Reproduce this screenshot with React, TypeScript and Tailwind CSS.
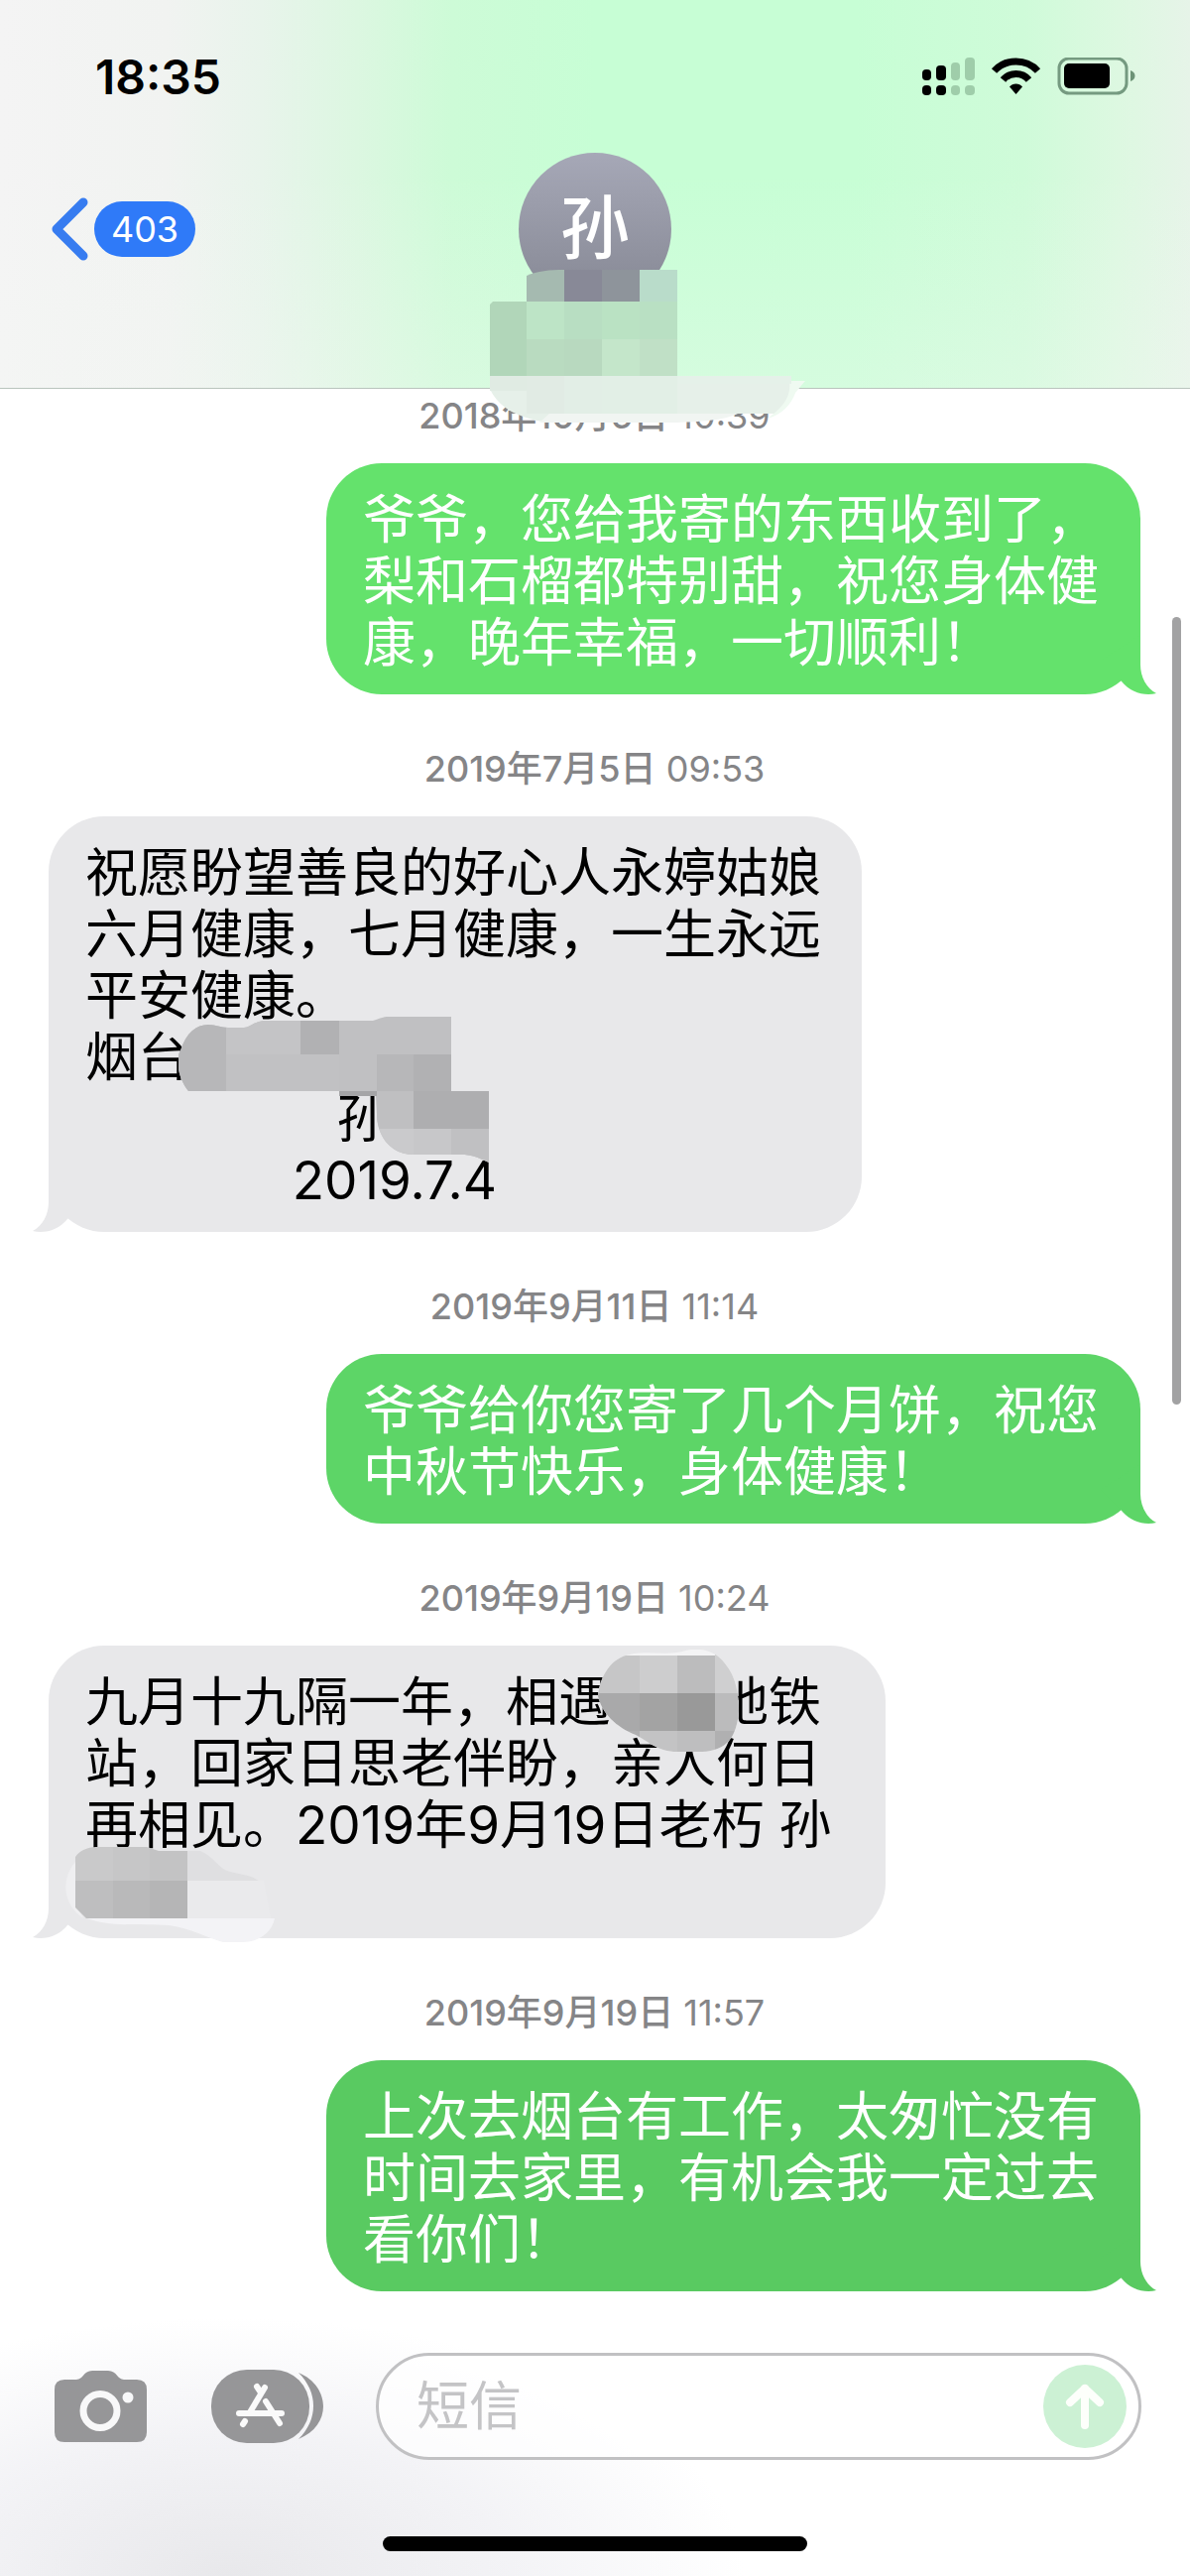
import type { ReactNode } from 'react';

interface Message {
  id: number;
  date: string;
  time: string;
  text: string;
  sent: boolean;
  color: string;
  bubbleClass: string;
  cover?: ReactNode;
}

type Cell = [x: number, y: number, width: number, height: number, fill: string];

function Cells({ cells }: { cells: Cell[] }) {
  return (
    <>
      {cells.map(([x, y, width, height, fill], i) => (
        <rect key={i} x={x} y={y} width={width} height={height} fill={fill} />
      ))}
    </>
  );
}

// pixelated covers over private names and addresses
function NameCover() {
  return (
    <svg
      className="absolute left-1/2 top-[272px] -ml-[106px]"
      width="318"
      height="156"
      viewBox="0 0 318 156"
      aria-hidden="true"
    >
      <path d="M0 118 L190 112 L316 112 C306 122 304 138 290 145 L189 145 L189 154 L60 154 C30 150 8 140 -1 118Z" fill="#e6f0e9" />
      <path d="M60 145 H250 C236 152 210 153 189 154 H50Z" fill="#f1f5f2" />
      <path d="M302 112 H318 L308 124 C304 136 294 146 280 150 C296 138 304 128 302 112Z" fill="#effaf1" />
      <path d="M37 40 V6 C48 1 60 0 75 0 V40Z" fill="#a5bab0" />
      <Cells
        cells={[
          [75, 0, 38, 32, '#888997'],
          [113, 0, 38, 32, '#8e949b'],
          [151, 0, 38, 32, '#b9dcca'],
          [37, 32, 38, 38, '#bde4c6'],
          [75, 32, 38, 38, '#b8dec2'],
          [113, 32, 38, 38, '#bae2c3'],
          [151, 32, 38, 38, '#b9e0c3'],
          [37, 70, 38, 37, '#b9dbc0'],
          [75, 70, 38, 37, '#b8d9bf'],
          [113, 70, 38, 37, '#c4e6ca'],
          [151, 70, 38, 37, '#c0e0c6'],
          [0, 107, 37, 15, '#e0ebe3'],
          [37, 107, 38, 38, '#e1ebe4'],
          [75, 107, 38, 38, '#e2eee6'],
          [113, 107, 76, 38, '#e2efe6'],
          [189, 107, 115, 8, '#e5f1e9'],
        ]}
      />
      <path d="M3 32 H37 V107 H0 V35Z" fill="#b1d6b9" />
    </svg>
  );
}

function AddressCover() {
  return (
    <svg className="absolute left-[131px] top-[202px]" width="314" height="148" viewBox="0 0 314 148" aria-hidden="true">
      <clipPath id="address">
        <path d="M10 75 C-3 58 -2 40 2 34 C8 16 18 8 30 8 C38 8 42 11 50 11 H66 C74 10 76 4 90 4 H196 C203 2 206 0 212 0 H275 V75 H313 V147 C300 141 295 139 285 139 H235 C212 138 200 118 200 98 L199 80 H162 V75Z" />
      </clipPath>
      <g clipPath="url(#address)">
        <rect width="314" height="148" fill="#c0c0c2" />
        <Cells
          cells={[
            [0, 0, 48, 75, '#b7b7b9'],
            [48, 0, 75, 38, '#c4c4c6'],
            [123, 0, 39, 38, '#b1b1b3'],
            [48, 38, 114, 37, '#c1c1c3'],
            [200, 38, 37, 37, '#b7b7b9'],
            [237, 38, 38, 37, '#b1b1b3'],
            [162, 75, 38, 5, '#a5a5a7'],
            [200, 75, 37, 38, '#bfbfc1'],
            [237, 75, 76, 38, '#aeaeb0'],
            [200, 113, 37, 35, '#cacacc'],
            [237, 113, 38, 35, '#c7c7c9'],
            [275, 113, 38, 35, '#c0c0c2'],
          ]}
        />
      </g>
    </svg>
  );
}

function StationCover() {
  return (
    <>
      <svg className="absolute left-[554px] top-1" width="144" height="104" viewBox="0 0 144 104" aria-hidden="true">
        <clipPath id="station">
          <path d="M0 47 C2 26 14 8 32 5 C50 1 70 6 85 2 C100 -3 118 0 128 14 C140 28 142 47 142 62 C140 88 130 102 105 103 H80 C60 103 50 92 38 86 C18 78 4 64 0 47Z" />
        </clipPath>
        <g clipPath="url(#station)">
          <rect width="144" height="104" fill="#f4f4f5" />
          <Cells
            cells={[
              [0, 6, 42, 38, '#c6c6c7'],
              [42, 6, 38, 38, '#cdcdce'],
              [80, 6, 38, 38, '#bcbcbd'],
              [118, 0, 26, 44, '#cfcfd0'],
              [0, 44, 42, 38, '#a9a9aa'],
              [42, 44, 38, 38, '#a3a3a3'],
              [80, 44, 38, 38, '#999999'],
              [118, 44, 26, 38, '#bbbbbc'],
              [0, 82, 42, 22, '#b0b0b1'],
              [42, 82, 38, 22, '#c3c3c4'],
              [80, 82, 38, 22, '#bebebf'],
              [118, 82, 26, 22, '#b0b0b1'],
            ]}
          />
        </g>
      </svg>
      <svg className="absolute left-[11px] top-[200px]" width="220" height="102" viewBox="0 0 220 102" aria-hidden="true">
        <path d="M16 18 C2 34 2 60 24 75 L16 60Z" fill="#efeff1" />
        <path d="M129 7 H142 C155 12 160 25 172 28 L190 32 C202 35 207 45 204 37 V37 H129Z" fill="#dfdfe1" />
        <path d="M129 37 H206 L213 75 H129Z" fill="#eaeaec" />
        <path d="M28 75 H217 C214 90 200 99 185 99 H165 C150 95 130 84 110 82 C80 80 50 84 28 75Z" fill="#f3f3f6" />
        <clipPath id="signature">
          <path d="M16 13 C22 4 32 3 40 3 H88 L100 7 H129 V75 H27 L16 64Z" />
        </clipPath>
        <g clipPath="url(#signature)">
          <Cells
            cells={[
              [0, 0, 54, 37, '#c9c9ca'],
              [54, 0, 37, 37, '#c6c6c7'],
              [91, 0, 38, 37, '#c3c3c4'],
              [0, 37, 54, 38, '#bebebf'],
              [54, 37, 37, 38, '#b9b9ba'],
              [91, 37, 38, 38, '#b5b5b6'],
            ]}
          />
        </g>
      </svg>
    </>
  );
}

const messages: Message[] = [
  {
    id: 1,
    date: '2018年10月6日',
    time: '10:39',
    text: '爷爷，您给我寄的东西收到了，\n梨和石榴都特别甜，祝您身体健\n康，晚年幸福，一切顺利！',
    sent: true,
    color: '#64e26c',
    bubbleClass: 'w-[821px] bg-[#64e26c] text-white',
  },
  {
    id: 2,
    date: '2019年7月5日',
    time: '09:53',
    text: '祝愿盼望善良的好心人永婷姑娘\n六月健康，七月健康，一生永远\n平安健康。\n烟台\n                 孙\n              2019.7.4',
    sent: false,
    color: '#e8e8ea',
    bubbleClass: 'w-[820px] bg-[#e8e8ea] text-black',
    cover: <AddressCover />,
  },
  {
    id: 3,
    date: '2019年9月11日',
    time: '11:14',
    text: '爷爷给你您寄了几个月饼，祝您\n中秋节快乐，身体健康！',
    sent: true,
    color: '#5dd567',
    bubbleClass: 'w-[821px] bg-[#5dd567] text-white',
  },
  {
    id: 4,
    date: '2019年9月19日',
    time: '10:24',
    text: '九月十九隔一年，相遇　　地铁\n站，回家日思老伴盼，亲人何日\n再相见。2019年9月19日老朽 孙\n ',
    sent: false,
    color: '#e8e8ea',
    bubbleClass: 'w-[844px] bg-[#e8e8ea] text-black',
    cover: <StationCover />,
  },
  {
    id: 5,
    date: '2019年9月19日',
    time: '11:57',
    text: '上次去烟台有工作，太匆忙没有\n时间去家里，有机会我一定过去\n看你们！',
    sent: true,
    color: '#59ca61',
    bubbleClass: 'w-[821px] bg-[#59ca61] text-white',
  },
];

function StatusIcons() {
  return (
    <svg width="216" height="40" viewBox="0 0 216 40" aria-label="信号、无线局域网、电池">
      <rect x="0" y="12" width="9" height="11" rx="4" />
      <rect x="14" y="8" width="10" height="15" rx="4" />
      <rect x="0" y="28" width="9" height="10" rx="4" />
      <rect x="14" y="28" width="10" height="10" rx="4" />
      <g fill="#9fcdaa">
        <rect x="29" y="5" width="9" height="18" rx="4" />
        <rect x="43" y="0" width="10" height="23" rx="4" />
        <rect x="29" y="28" width="9" height="10" rx="4" />
        <rect x="43" y="28" width="10" height="10" rx="4" />
      </g>
      <g fill="none" stroke="#000" strokeWidth="7">
        <path d="M72.500 13.500 C84 0.800 105 0.800 116.500 13.500" />
        <path d="M81.500 22.500 C88 14.500 101 14.500 107.500 22.500" />
      </g>
      <path d="M88 29.500 C91 25.500 98 25.500 101 29.500 L94.500 37Z" />
      <rect x="138" y="1" width="68" height="35" rx="10" fill="none" stroke="#759a80" strokeWidth="3" />
      <rect x="143" y="6" width="46" height="25" rx="5" />
      <path d="M210 13 C216 15 216 22 210 24Z" fill="#6c9376" />
    </svg>
  );
}

function Header() {
  return (
    <header className="relative z-10 border-b border-[#b9c4bd] bg-[linear-gradient(180deg,transparent_45%,#f4f8f450_100%),linear-gradient(90deg,#f4f4f4_0%,#f1f3f1_14%,#e8f4eb_22%,#dcf7e1_30%,#cdfbd7_38%,#c7fed5_50%,#c7fed5_72%,#cffbd9_86%,#ddf8e1_94%,#e6f4e8_100%)] pb-[83px] pt-12">
      <div className="flex h-[60px] items-center justify-between pl-24 pr-[54px]">
        <time className="text-[48px] font-semibold leading-none">18:35</time>
        <StatusIcons />
      </div>
      <div className="grid grid-cols-3 items-center pt-[46px]">
        <button type="button" className="flex items-center gap-[5px] justify-self-start pl-[50px]" aria-label="返回">
          <svg width="40" height="66" viewBox="0 0 40 66" fill="none" stroke="#377cf0" strokeWidth="9" strokeLinecap="round" strokeLinejoin="round">
            <path d="M34 6 L7 33 L34 60" />
          </svg>
          <span className="flex h-14 w-[102px] items-center justify-center rounded-full bg-[#2f7af8] text-[36px] leading-none text-white">
            403
          </span>
        </button>
        <div className="flex h-[154px] w-[154px] items-center justify-center justify-self-center rounded-full bg-linear-to-b from-[#a6a8b7] to-[#858793] text-[70px] font-medium leading-none text-white">
          孙
        </div>
      </div>
      <NameCover />
    </header>
  );
}

function Tail({ sent, color }: { sent: boolean; color: string }) {
  return (
    <svg
      className={sent ? 'absolute -right-4 bottom-0' : 'absolute -left-4 bottom-0 -scale-x-100'}
      width="56"
      height="64"
      viewBox="0 0 56 64"
      fill={color}
      aria-hidden="true"
    >
      <path d="M40 4 V34 C40 46 46 58 56 63 C44 66 30 62 21 51 L0 30Z" />
    </svg>
  );
}

function Bubble({ message }: { message: Message }) {
  const { date, time, text, sent, color, bubbleClass, cover } = message;
  return (
    <li className="flex flex-col">
      <p className="pb-7 text-center text-[36px] leading-10 text-[#858587]">
        <span className="font-medium">{date}</span> {time}
      </p>
      <div className={`relative rounded-[56px] pb-[21px] pl-[37px] pt-[26px] ${sent ? 'self-end' : 'self-start'} ${bubbleClass}`}>
        <Tail sent={sent} color={color} />
        <p className="relative whitespace-pre text-[53px] leading-[62px]">{text}</p>
        {cover}
      </div>
    </li>
  );
}

function Composer() {
  return (
    <footer className="bg-[radial-gradient(ellipse_520px_260px_at_230px_100%,#e8e8eb_0%,#f3f3f6_55%,#ffffff_100%)] pb-[25px] pt-[62px]">
      <form className="flex items-center pl-[55px] pr-[49px]" onSubmit={(e) => e.preventDefault()}>
        <button type="button" className="shrink-0" aria-label="相机">
          <svg width="93" height="72" viewBox="0 0 93 72" fill="#969698">
            <path d="M10 9 H22 C29 9 29 0 38 0 H54 C63 0 63 9 70 9 H83 Q93 9 93 19 V62 Q93 72 83 72 H10 Q0 72 0 62 V19 Q0 9 10 9Z" />
            <circle cx="46" cy="40.500" r="17" fill="none" stroke="#f8f8f9" strokeWidth="7" />
            <circle cx="74" cy="27" r="5.500" fill="#f8f8f9" />
          </svg>
        </button>
        <button type="button" className="ml-[65px] shrink-0" aria-label="应用">
          <svg width="114" height="74" viewBox="0 0 114 74" fill="#969698">
            <path d="M88 3 C105 10 113 24 113 37 C113 50 105 63 88 70 C108 50 108 23 88 3Z" />
            <rect width="99" height="74" rx="36" />
            <g stroke="#fafafa" strokeWidth="6" strokeLinecap="round">
              <path d="M54 18 L39 43" />
              <path d="M46 17 L50 23" />
              <path d="M55 32 L69 54" />
              <path d="M28 44 H71" />
              <path d="M34 52 L32 55" />
            </g>
          </svg>
        </button>
        <div className="ml-[52px] flex h-[108px] min-w-0 flex-1 items-center rounded-full border-[3px] border-[#c1c1c3] bg-white/70 pl-[38px] pr-3">
          <input
            type="text"
            aria-label="短信"
            placeholder="短信"
            className="w-full min-w-0 flex-1 bg-transparent text-[53px] leading-[62px] outline-none placeholder:text-[#c4c4c6]"
          />
          <button type="submit" aria-label="发送" className="flex h-[84px] w-[84px] shrink-0 items-center justify-center rounded-full bg-[#ccf1d4]">
            <svg width="42" height="48" viewBox="0 0 42 48" fill="none" stroke="#fdfffb" strokeWidth="8" strokeLinecap="round" strokeLinejoin="round">
              <path d="M21 43 V6" />
              <path d="M6 20 L21 6 L36 20" />
            </svg>
          </button>
        </div>
      </form>
      <div className="mx-auto mt-[77px] h-[15px] w-[428px] rounded-full bg-black" />
    </footer>
  );
}

export default function App() {
  return (
    <div className="min-h-screen bg-white font-['Inter','Noto_Sans_CJK_SC',sans-serif] text-black" lang="zh-CN">
      <Header />
      <main className="relative pl-[49px] pr-[50px] pt-[7px]">
        <ul className="flex flex-col gap-[55px]">
          {messages.map((message) => (
            <Bubble key={message.id} message={message} />
          ))}
        </ul>
        <div className="absolute right-[9px] top-[230px] h-[794px] w-[9px] rounded-full bg-[#a2a2a3]" />
      </main>
      <Composer />
    </div>
  );
}
